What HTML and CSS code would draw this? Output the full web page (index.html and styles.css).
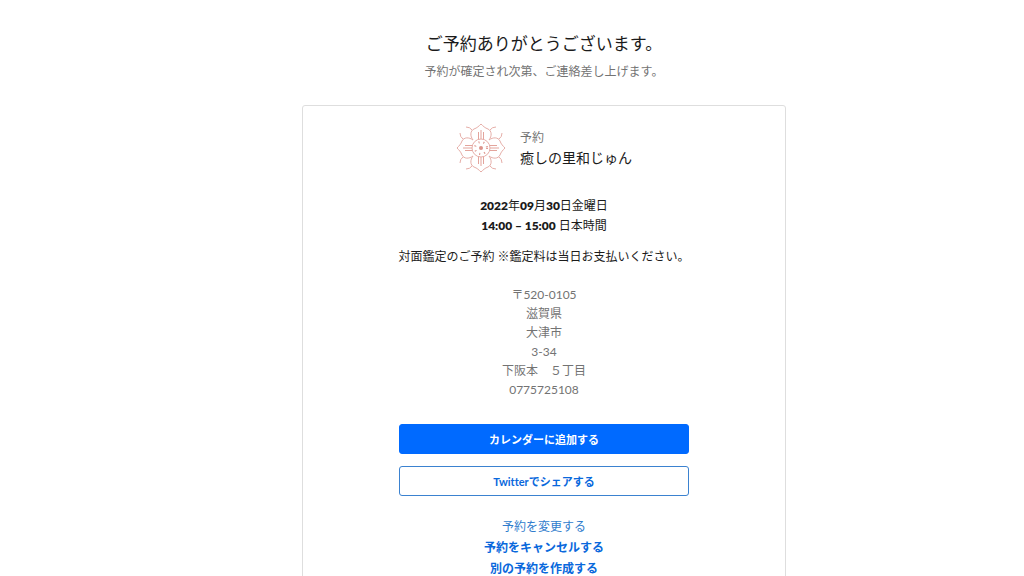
FILE: index.html
```html
<!DOCTYPE html>
<html lang="ja">
<head>
<meta charset="utf-8">
<meta name="viewport" content="width=device-width, initial-scale=1">
<title>ご予約ありがとうございます。</title>
<link rel="stylesheet" href="styles.css">
</head>
<body>
<main class="page">
  <header class="intro">
    <h1 class="title">ご予約ありがとうございます。</h1>
    <p class="subtitle">予約が確定され次第、ご連絡差し上げます。</p>
  </header>
  <section class="card">
    <div class="merchant">
      <svg class="logo" viewBox="0 0 50 50" aria-hidden="true">
        <defs>
          <g id="petal">
            <path d="M17 17C14 13 14 8 18 6C21 5 23 3 25 1C27 3 29 5 32 6C36 8 36 13 33 17"/>
            <path class="stripes" d="M22.5 16V9M25 16V7M27.5 16V9"/>
            <path d="M10 4Q14 4 16 7M40 4Q36 4 34 7"/>
          </g>
        </defs>
        <use href="#petal"/>
        <use href="#petal" transform="rotate(90 25 25)"/>
        <use href="#petal" transform="rotate(180 25 25)"/>
        <use href="#petal" transform="rotate(270 25 25)"/>
        <circle cx="25" cy="25" r="9"/>
        <circle class="dots" cx="25" cy="25" r="6"/>
        <circle class="core" cx="25" cy="25" r="2"/>
      </svg>
      <div>
        <p class="label">予約</p>
        <h2 class="name">癒しの里和じゅん</h2>
      </div>
    </div>
    <div class="time">
      <p><b>2022</b>年<b>09</b>月<b>30</b>日金曜日</p>
      <p><b>14:00 – 15:00</b> 日本時間</p>
    </div>
    <p class="service">対面鑑定のご予約 ※鑑定料は当日お支払いください。</p>
    <address class="address">
      〒520-0105<br>滋賀県<br>大津市<br>3-34<br>下阪本　５丁目<br>0775725108
    </address>
    <div class="actions">
      <button class="button primary" type="button">カレンダーに追加する</button>
      <button class="button" type="button">Twitterでシェアする</button>
    </div>
    <nav class="links">
      <a class="link light" href="#change">予約を変更する</a>
      <a class="link" href="#cancel">予約をキャンセルする</a>
      <a class="link" href="#new">別の予約を作成する</a>
    </nav>
  </section>
</main>
</body>
</html>
```
FILE: styles.css
```css
* {
  box-sizing: border-box;
}

body,
h1,
h2,
p {
  margin: 0;
}

body {
  background: #fff;
  color: #1b1b1b;
  font-family: Lato, "Noto Sans CJK JP", sans-serif;
  font-size: 12px;
  font-variant-ligatures: none;
  line-height: 20px;
}

b {
  font-weight: 800;
}

.page {
  display: flex;
  flex-direction: column;
  align-items: center;
  gap: 23px;
  height: 100vh;
  overflow: hidden;
  padding: 32px 0 0 64px;
  text-align: center;
}

.title {
  font-size: 17px;
  font-weight: 400;
  line-height: 24px;
}

.subtitle {
  margin-top: 6px;
  color: #737373;
}

.card {
  flex: none;
  display: flex;
  flex-direction: column;
  align-items: center;
  width: 100%;
  max-width: 484px;
  padding: 17px 24px 32px;
  border: 1px solid #dedede;
  border-radius: 3px;
}

.merchant {
  display: flex;
  align-items: center;
  gap: 14px;
  text-align: left;
}

.logo {
  width: 50px;
  height: 50px;
  fill: none;
  stroke: #e6aea8;
  stroke-width: 1;
}

.stripes {
  stroke: #e3a49c;
}

.dots {
  stroke: #dc938b;
  stroke-width: 2;
  stroke-dasharray: 1 4;
}

.core {
  fill: #dc938b;
  stroke: none;
}

.label {
  color: #737373;
}

.name {
  font-size: 14px;
  font-weight: 400;
}

.time {
  margin-top: 23px;
}

.service {
  margin-top: 11px;
}

.address {
  margin-top: 18px;
  color: #737373;
  font-style: normal;
  line-height: 19px;
}

.actions {
  display: grid;
  gap: 12px;
  width: 100%;
  max-width: 290px;
  margin-top: 25px;
}

.button {
  height: 30px;
  padding: 2px 12px 0;
  border: 1px solid #3b82d0;
  border-radius: 3px;
  background: #fff;
  color: #0968dc;
  font: inherit;
  font-size: 11px;
  font-weight: 700;
}

.primary {
  border-color: #006aff;
  background: #006aff;
  color: #fff;
}

.links {
  display: flex;
  flex-direction: column;
  align-items: center;
  margin-top: 20px;
  line-height: 21px;
}

.link {
  color: #0968dc;
  font-weight: 700;
  text-decoration: none;
}

.light {
  color: #2f7ccd;
  font-weight: 400;
}
```
